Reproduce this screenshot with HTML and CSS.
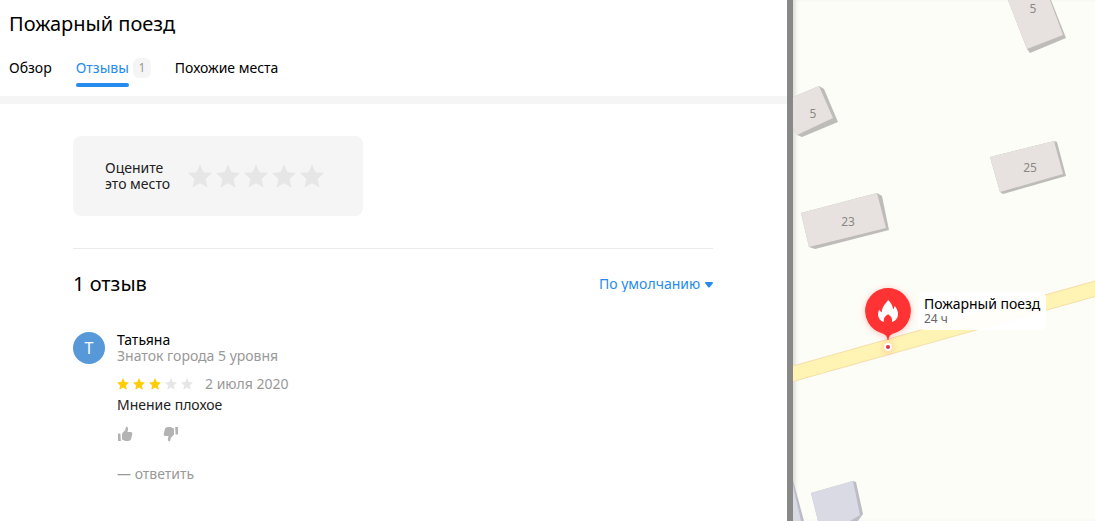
FILE: index.html
```html
<!DOCTYPE html>
<html lang="ru">
<head>
    <meta charset="UTF-8">
    <meta name="viewport" content="width=device-width, initial-scale=1.0">
    <title>Пожарный поезд</title>
    <link rel="stylesheet" href="styles.css">
</head>
<body>
    <!-- Shared icon shapes -->
    <svg class="sprite" aria-hidden="true">
        <symbol id="star" viewBox="0 0 24 24">
            <path d="M12 .2l3.500 8 8.400.8-6.300 6 1.900 8.400L12 19.200l-7.500 4.200L6.400 15 .1 9l8.400-.8z"/>
        </symbol>
        <symbol id="thumb" viewBox="0 0 16 16">
            <path d="M1 7.400h2.400L3.900 15H1z"/>
            <path d="M5 7.600L8.200 4 9 .8C10.600 .6 11.300 1.700 11.100 3.100L10.500 6h3.200c1.200 0 1.800.9 1.600 1.900l-1 4.300c-.4 1.800-1.500 2.700-3.200 2.700H8.500L5 13.600z"/>
        </symbol>
    </svg>

    <div class="layout">
        <!-- Place card -->
        <main class="card">
            <header class="card-header">
                <h1>Пожарный поезд</h1>
                <nav class="tabs">
                    <a class="tab" href="#overview">Обзор</a>
                    <a class="tab active" href="#reviews"><span class="tab-title">Отзывы</span><span class="tab-count">1</span></a>
                    <a class="tab" href="#similar">Похожие места</a>
                </nav>
            </header>

            <div class="card-content" id="reviews">
                <section class="rate-box">
                    <p>Оцените<br>это место</p>
                    <div class="rate-stars">
                        <button type="button" aria-label="1"><svg><use href="#star"/></svg></button>
                        <button type="button" aria-label="2"><svg><use href="#star"/></svg></button>
                        <button type="button" aria-label="3"><svg><use href="#star"/></svg></button>
                        <button type="button" aria-label="4"><svg><use href="#star"/></svg></button>
                        <button type="button" aria-label="5"><svg><use href="#star"/></svg></button>
                    </div>
                </section>

                <div class="reviews-header">
                    <h2>1 отзыв</h2>
                    <label class="sort">
                        <select aria-label="Сортировка">
                            <option>По умолчанию</option>
                        </select>
                        <svg viewBox="0 0 8 6"><path d="M0.500 0h7L8 1 4.500 5.600h-1L0 1z"/></svg>
                    </label>
                </div>

                <article class="review">
                    <div class="avatar">Т</div>
                    <div class="review-body">
                        <a class="author" href="#author">Татьяна</a>
                        <p class="level">Знаток города 5 уровня</p>
                        <div class="review-meta">
                            <div class="review-stars">
                                <svg class="full"><use href="#star"/></svg>
                                <svg class="full"><use href="#star"/></svg>
                                <svg class="full"><use href="#star"/></svg>
                                <svg><use href="#star"/></svg>
                                <svg><use href="#star"/></svg>
                            </div>
                            <time datetime="2020-07-02">2 июля 2020</time>
                        </div>
                        <p class="review-text">Мнение плохое</p>
                        <div class="votes">
                            <button type="button" aria-label="Нравится"><svg><use href="#thumb"/></svg></button>
                            <button type="button" class="dislike" aria-label="Не нравится"><svg><use href="#thumb"/></svg></button>
                        </div>
                        <button type="button" class="reply">— ответить</button>
                    </div>
                </article>
            </div>
        </main>

        <!-- Map -->
        <section class="map">
            <svg class="map-canvas">
                <path class="road" d="M-10 376.500L1200 36"/>
                <path class="road road-fill" d="M-10 376.500L1200 36"/>

                <path class="wall" d="M215 0L234 49l3 4 36-15L258 0z"/>
                <path class="roof" d="M215 0l19 49 36-14L257 0z"/>
                <path class="wall" d="M0 97l26-11 5 3 14 33-36 15-5-2-4-7z"/>
                <path class="roof" d="M0 97l26-11 14 32-36 17-4-7z"/>
                <path class="wall" d="M197 157l64-16 3 1 9 34-63 18-3-2z"/>
                <path class="roof" d="M197 157l64-16 9 33-63 18z"/>
                <path class="wall" d="M8 213l76-20 5 3 7 34-74 19-6-2z"/>
                <path class="roof" d="M8 213l76-20 9 35-77 19z"/>
                <path class="wall lilac" d="M18 493l42-12 3 1 7 32-5 7H25z"/>
                <path class="roof lilac" d="M18 493l42-12 7 34-10 6H25z"/>
                <path class="wall lilac" d="M0 480l11 41H0z"/>
                <path class="roof lilac" d="M0 486l8 35H0z"/>

                <text x="240" y="13">5</text>
                <text x="20" y="118">5</text>
                <text x="237" y="172">25</text>
                <text x="55" y="226">23</text>
            </svg>

            <a class="place" href="#place">
                <svg class="pin" viewBox="0 0 46 64">
                    <path fill="#ff3333" d="M23 0a23 23 0 0 1 7.500 44.700c-4 1.500-6.500 2.300-7 7.300h-1c-.5-5-3-5.800-7-7.300A23 23 0 0 1 23 0z"/>
                    <path fill="#fff" d="M23.200 12c3 3 4.500 6 5 9.500.8-1 1.300-2.200 1.500-3.500 2.300 2.800 3.500 5.500 3.300 8.500-.2 3.800-2.400 6.500-6 7.500.6-3.600-.8-5.800-3.900-7.700-3.300 1.900-4.900 4.200-4.300 7.700-3.500-1.100-5.600-3.700-5.800-7.500 0-1.800.5-3.400 1.200-4.800.7 1.200 1.500 2 2.600 2.500 0-5.300 3.400-8 6.400-12.200z"/>
                    <circle cx="23" cy="59" r="4" fill="#fff"/>
                    <circle cx="23" cy="59" r="2" fill="#dd3344"/>
                </svg>
                <span class="place-label">
                    <span class="place-name">Пожарный поезд</span>
                    <span class="place-hours">24 ч</span>
                </span>
            </a>
        </section>
    </div>
</body>
</html>
```
FILE: styles.css
```css
body {
    font-family: "Noto Sans", "Open Sans", sans-serif;
    font-size: 14px;
    line-height: 16px;
    margin: 0;
    color: #000;
    background-color: #fff;
}

h1, h2, p {
    margin: 0;
}

h1, h2 {
    font-size: 20px;
    line-height: 24px;
    font-weight: 400;
}

a {
    color: inherit;
    text-decoration: none;
}

button {
    padding: 0;
    border: none;
    background: none;
    font: inherit;
    cursor: pointer;
}

svg {
    display: block;
}

.sprite {
    display: none;
}

.layout {
    display: grid;
    grid-template-columns: 793fr 302fr;
    min-height: 100vh;
}

/* Place card */
.card {
    border-right: 6px solid #888;
}

.card-header {
    padding: 12px 9px 9px;
    border-bottom: 8px solid #f5f5f5;
}

.tabs {
    display: flex;
    gap: 24px;
    margin-top: 22px;
    line-height: 20px;
}

.tab {
    display: flex;
    gap: 4px;
    height: 29px;
}

.tab.active {
    color: #258bee;
}

.tab.active .tab-title {
    display: flex;
    flex-direction: column;
    justify-content: space-between;
}

.tab.active .tab-title::after {
    content: "";
    height: 4px;
    border-radius: 2px;
    background-color: #258bee;
}

.tab-count {
    width: 18px;
    height: 20px;
    border-radius: 6px;
    background-color: #f5f5f5;
    color: #999;
    font-size: 12px;
    text-align: center;
}

.card-content {
    max-width: 640px;
    margin: 0 auto;
    padding: 32px 1px 32px 0;
}

.rate-box {
    display: flex;
    align-items: center;
    gap: 18px;
    box-sizing: border-box;
    width: 290px;
    height: 80px;
    padding: 0 32px;
    border-radius: 8px;
    background-color: #f5f5f5;
    color: #222;
}

.rate-stars {
    display: flex;
    gap: 4px;
    fill: #e6e6e6;
}

.rate-stars svg {
    width: 24px;
    height: 24px;
}

.reviews-header {
    display: flex;
    justify-content: space-between;
    align-items: center;
    margin-top: 32px;
    padding-top: 23px;
    border-top: 1px solid #ebebeb;
}

.sort {
    display: flex;
    align-items: center;
    gap: 4px;
    color: #258bee;
}

.sort select {
    appearance: none;
    padding: 0;
    border: none;
    background: none;
    color: inherit;
    font: inherit;
    cursor: pointer;
}

.sort svg {
    width: 8px;
    height: 6px;
    margin-top: 2px;
    fill: currentColor;
}

/* Review */
.review {
    display: flex;
    gap: 12px;
    margin-top: 36px;
}

.avatar {
    width: 32px;
    height: 32px;
    border-radius: 50%;
    background-color: #5698d8;
    color: #fff;
    font-size: 16px;
    line-height: 32px;
    text-align: center;
}

.review-body {
    flex: 1;
}

.author {
    display: block;
}

.level,
.review-meta,
.reply {
    color: #999;
}

.review-meta {
    display: flex;
    align-items: center;
    gap: 12px;
    margin-top: 12px;
}

.review-stars {
    display: flex;
    gap: 4px;
    fill: #e6e6e6;
}

.review-stars svg {
    width: 12px;
    height: 12px;
}

.review-stars .full {
    fill: #fc0;
}

.review-text {
    margin-top: 4px;
    line-height: 18px;
    color: #222;
}

.votes {
    display: flex;
    gap: 30px;
    margin: 12px 0 24px;
    fill: #b3b3b3;
}

.votes svg {
    width: 16px;
    height: 16px;
}

.dislike svg {
    transform: rotate(180deg);
}

/* Map */
.map {
    position: relative;
    overflow: hidden;
    background-color: #fcfdf7;
    box-shadow: inset 4px 0 4px -2px rgba(0, 0, 0, 0.15);
}

.map-canvas {
    position: absolute;
    width: 100%;
    height: 100%;
}

.map-canvas text {
    fill: #8a8885;
    font-size: 12px;
    text-anchor: middle;
}

.road {
    stroke: #f6deaa;
    stroke-width: 16px;
}

.road-fill {
    stroke: #fff4b3;
    stroke-width: 14px;
}

.roof {
    fill: #e7e2df;
}

.wall {
    fill: #bebcb8;
}

.roof.lilac {
    fill: #dadae4;
}

.wall.lilac {
    fill: #bcbcc6;
}

.place {
    position: absolute;
    left: 72px;
    top: 288px;
    display: flex;
    align-items: flex-start;
    gap: 7px;
}

.pin {
    width: 46px;
    height: 64px;
    filter: drop-shadow(0 1px 3px rgba(255, 51, 51, 0.3));
}

.place-label {
    display: flex;
    flex-direction: column;
    margin-top: 4px;
    padding: 4px 6px;
    border-radius: 6px;
    background-color: rgba(255, 255, 255, 0.9);
    white-space: nowrap;
}

.place-hours {
    color: #666;
    font-size: 12px;
    line-height: 14px;
}
```
